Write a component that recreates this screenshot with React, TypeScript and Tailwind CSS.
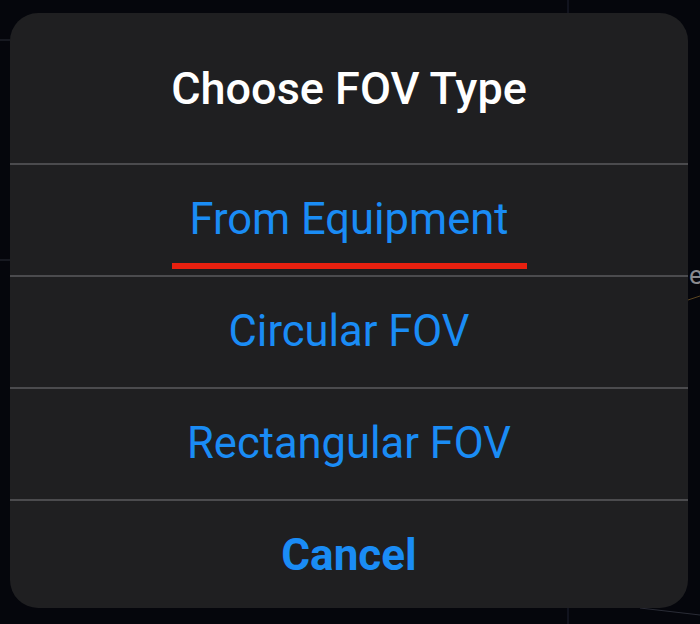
const options = ['From Equipment', 'Circular FOV', 'Rectangular FOV'];

export default function App() {
  return (
    <div
      className="relative w-[700px] h-[624px] overflow-hidden bg-[#05060c]"
      style={{ fontFamily: 'Roboto, "Liberation Sans", sans-serif' }}
    >
      {/* faint sky-map lines behind the sheet */}
      <svg className="absolute inset-0" width="700" height="624">
        <line x1="0" y1="40" x2="10" y2="40" stroke="#2a2c36" strokeWidth="1" />
        <line x1="0" y1="260" x2="10" y2="260" stroke="#2a2c36" strokeWidth="1" />
        <line x1="688" y1="300" x2="700" y2="296" stroke="#5a4420" strokeWidth="1" />
        <line x1="568" y1="0" x2="568" y2="13" stroke="#1e2030" strokeWidth="1" />
        <line x1="568" y1="608" x2="568" y2="624" stroke="#1e2030" strokeWidth="1" />
        <line x1="640" y1="608" x2="700" y2="615" stroke="#2a2c36" strokeWidth="1" />
      </svg>
      <span className="absolute left-[689px] top-[262px] text-[26px] leading-none text-[#8a8a8e]">e</span>

      <div className="absolute left-[10px] top-[13px] w-[678px] h-[595px] rounded-[28px] bg-[#1f1f21] flex flex-col overflow-hidden">
        <div className="h-[150px] flex items-center justify-center">
          <h1 className="text-[45px] font-medium text-white leading-none">Choose FOV Type</h1>
        </div>
        {options.map((label, i) => (
          <div key={label} className="h-[112px] border-t-2 border-[#4b4b4e] flex items-center justify-center relative">
            <span className="text-[43.5px] text-[#1a8cf5] leading-none">{label}</span>
            {i === 0 && (
              <div className="absolute left-[162px] top-[98px] w-[355px] h-[6px] bg-[#e8200f]" />
            )}
          </div>
        ))}
        <div className="flex-1 border-t-2 border-[#4b4b4e] flex items-center justify-center">
          <span className="text-[44px] font-bold text-[#1a8cf5] leading-none">Cancel</span>
        </div>
      </div>
    </div>
  );
}
